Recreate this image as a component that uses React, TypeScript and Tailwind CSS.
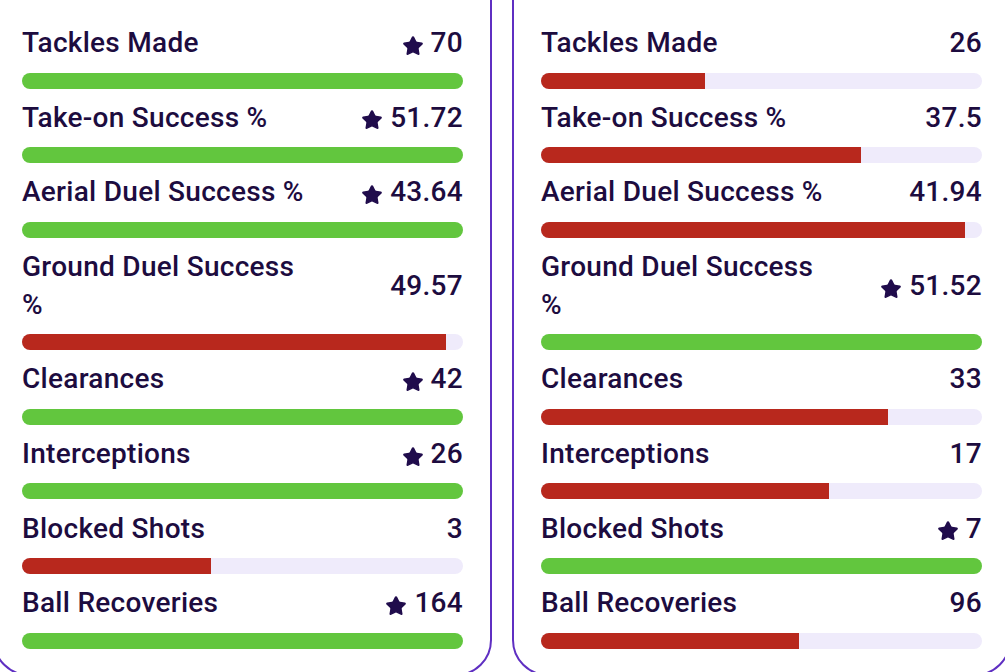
import * as React from "react";
import { Star } from "lucide-react";

type Stat = { label: string; value: string; pct: number; best: boolean };

const left: Stat[] = [
  { label: "Tackles Made", value: "70", pct: 100, best: true },
  { label: "Take-on Success %", value: "51.72", pct: 100, best: true },
  { label: "Aerial Duel Success %", value: "43.64", pct: 100, best: true },
  { label: "Ground Duel Success %", value: "49.57", pct: 96.2, best: false },
  { label: "Clearances", value: "42", pct: 100, best: true },
  { label: "Interceptions", value: "26", pct: 100, best: true },
  { label: "Blocked Shots", value: "3", pct: 42.9, best: false },
  { label: "Ball Recoveries", value: "164", pct: 100, best: true },
];

const right: Stat[] = [
  { label: "Tackles Made", value: "26", pct: 37.1, best: false },
  { label: "Take-on Success %", value: "37.5", pct: 72.5, best: false },
  { label: "Aerial Duel Success %", value: "41.94", pct: 96.1, best: false },
  { label: "Ground Duel Success %", value: "51.52", pct: 100, best: true },
  { label: "Clearances", value: "33", pct: 78.6, best: false },
  { label: "Interceptions", value: "17", pct: 65.4, best: false },
  { label: "Blocked Shots", value: "7", pct: 100, best: true },
  { label: "Ball Recoveries", value: "96", pct: 58.5, best: false },
];

function StatRow({ s }: { s: Stat }) {
  return (
    <div className="flex flex-col">
      <div className="flex items-center justify-between gap-4">
        <span className="max-w-[296px] leading-[37.5px]">{s.label}</span>
        <span className="flex items-center gap-[7px] leading-[37.5px] whitespace-nowrap">
          {s.best && (
            <Star size={22} fill="currentColor" strokeWidth={1.5} className="translate-y-[3px] text-[#200c4c]" />
          )}
          {s.value}
        </span>
      </div>
      <div className="mt-[11px] h-4 w-full overflow-hidden rounded-full bg-[#efebfb]">
        <div
          className={s.best ? "h-full bg-[#62c63e]" : "h-full bg-[#b8281d]"}
          style={{ width: `${s.pct}%` }}
        />
      </div>
    </div>
  );
}

function Card({ stats }: { stats: Stat[] }) {
  return (
    <div className="w-[499px] shrink-0 rounded-[36px] border-2 border-[#5f2fc2] bg-white px-[27px] pt-[62px] pb-[25px]">
      <div className="flex flex-col gap-[10.2px]">
        {stats.map((s) => (
          <StatRow key={s.label} s={s} />
        ))}
      </div>
    </div>
  );
}

export default function App() {
  return (
    <div
      className="relative h-[672px] w-full overflow-hidden bg-white text-[28px] font-medium tracking-[0.01em] text-[#1d0c3f]"
      style={{ fontFamily: "Roboto, 'Liberation Sans', sans-serif" }}
    >
      <div className="-mt-[40px] -ml-[7px] flex gap-[20px]">
        <Card stats={left} />
        <Card stats={right} />
      </div>
    </div>
  );
}
